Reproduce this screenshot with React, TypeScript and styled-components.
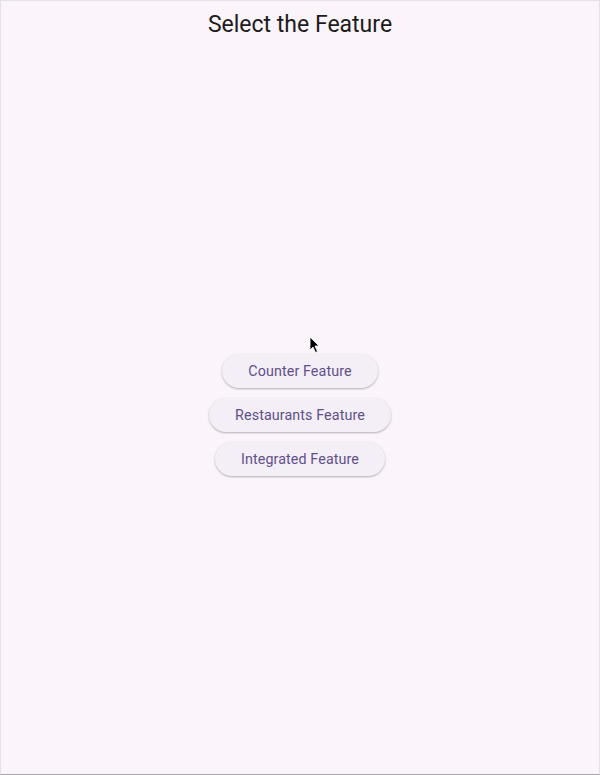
import React from "react";
import styled, { createGlobalStyle } from "styled-components";

const Global = createGlobalStyle`
  html, body { margin: 0; padding: 0; background: #fbf5fb; }
  * { box-sizing: border-box; }
`;

const Frame = styled.div`
  position: relative;
  width: 600px;
  height: 775px;
  display: flex;
  flex-direction: column;
  background: #fbf5fb;
  border: 1px solid #e6e0e8;
  border-bottom-color: #a9a5aa;
  font-family: Roboto, "Noto Sans", sans-serif;
`;

const Header = styled.header`
  height: 46px;
  display: flex;
  align-items: center;
  justify-content: center;
  flex-shrink: 0;
`;

const Title = styled.h1`
  margin: 0;
  font-size: 23px;
  font-weight: 400;
  color: #1d1b20;
  letter-spacing: 0;
`;

const Body = styled.main`
  flex: 1;
  display: flex;
  flex-direction: column;
  align-items: center;
  justify-content: center;
  gap: 10px;
  padding-top: 8px;
`;

const FeatureButton = styled.button`
  height: 34px;
  padding: 0 26px;
  border: none;
  border-radius: 17px;
  background: #f4eef6;
  color: #5f5189;
  font-family: Roboto, "Noto Sans", sans-serif;
  font-size: 14.3px;
  font-weight: 400;
  letter-spacing: 0.1px;
  box-shadow: 0 1px 2px rgba(0, 0, 0, 0.22), 0 1px 3px rgba(0, 0, 0, 0.08);
  cursor: pointer;
`;

const Cursor = styled.svg`
  position: absolute;
  left: 308px;
  top: 335px;
  width: 12px;
  height: 18px;
`;

export default function App() {
  return (
    <>
      <Global />
      <Frame>
        <Header>
          <Title>Select the Feature</Title>
        </Header>
        <Body>
          <FeatureButton>Counter Feature</FeatureButton>
          <FeatureButton>Restaurants Feature</FeatureButton>
          <FeatureButton>Integrated Feature</FeatureButton>
        </Body>
        <Cursor viewBox="0 0 12 18">
          <path d="M1 1 L1 14 L4 11 L6.5 16.5 L8.5 15.5 L6 10 L10 10 Z" fill="#000" stroke="#fff" strokeWidth="0.8" />
        </Cursor>
      </Frame>
    </>
  );
}
